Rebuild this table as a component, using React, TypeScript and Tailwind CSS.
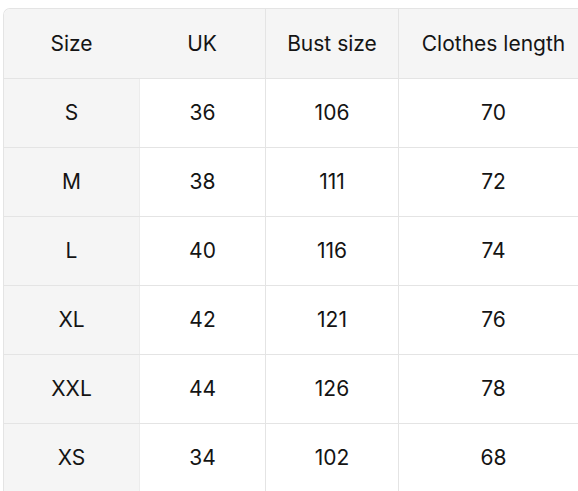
import React from 'react';

const rows = [
  { size: 'S', uk: '36', bust: '106', length: '70' },
  { size: 'M', uk: '38', bust: '111', length: '72' },
  { size: 'L', uk: '40', bust: '116', length: '74' },
  { size: 'XL', uk: '42', bust: '121', length: '76' },
  { size: 'XXL', uk: '44', bust: '126', length: '78' },
  { size: 'XS', uk: '34', bust: '102', length: '68' },
];

export default function App() {
  return (
    <div className="w-[578px] h-[491px] overflow-hidden bg-white pl-[3px] pt-[8px] font-['Inter',sans-serif] text-[21px] text-[#141414]">
      <div className="w-[600px] rounded-tl-[7px] border-l border-t border-[#e4e4e4] overflow-hidden">
        {/* header */}
        <div className="flex h-[70px] bg-[#f5f5f5] border-b border-[#e4e4e4]">
          <div className="w-[261px] flex">
            <div className="w-[135px] flex items-center justify-center">Size</div>
            <div className="w-[126px] flex items-center justify-center">UK</div>
          </div>
          <div className="w-[133px] flex items-center justify-center border-l border-[#e4e4e4]">Bust size</div>
          <div className="w-[190px] flex items-center justify-center border-l border-[#e4e4e4]">Clothes length</div>
        </div>

        {rows.map((r, i) => (
          <div key={i} className="flex h-[69px] border-b border-[#e4e4e4]">
            <div className="w-[135px] bg-[#f5f5f5] flex items-center justify-center">{r.size}</div>
            <div className="w-[126px] flex items-center justify-center border-l border-[#ececec]">{r.uk}</div>
            <div className="w-[133px] flex items-center justify-center border-l border-[#e4e4e4]">{r.bust}</div>
            <div className="w-[190px] flex items-center justify-center border-l border-[#e4e4e4]">{r.length}</div>
          </div>
        ))}
      </div>
    </div>
  );
}
